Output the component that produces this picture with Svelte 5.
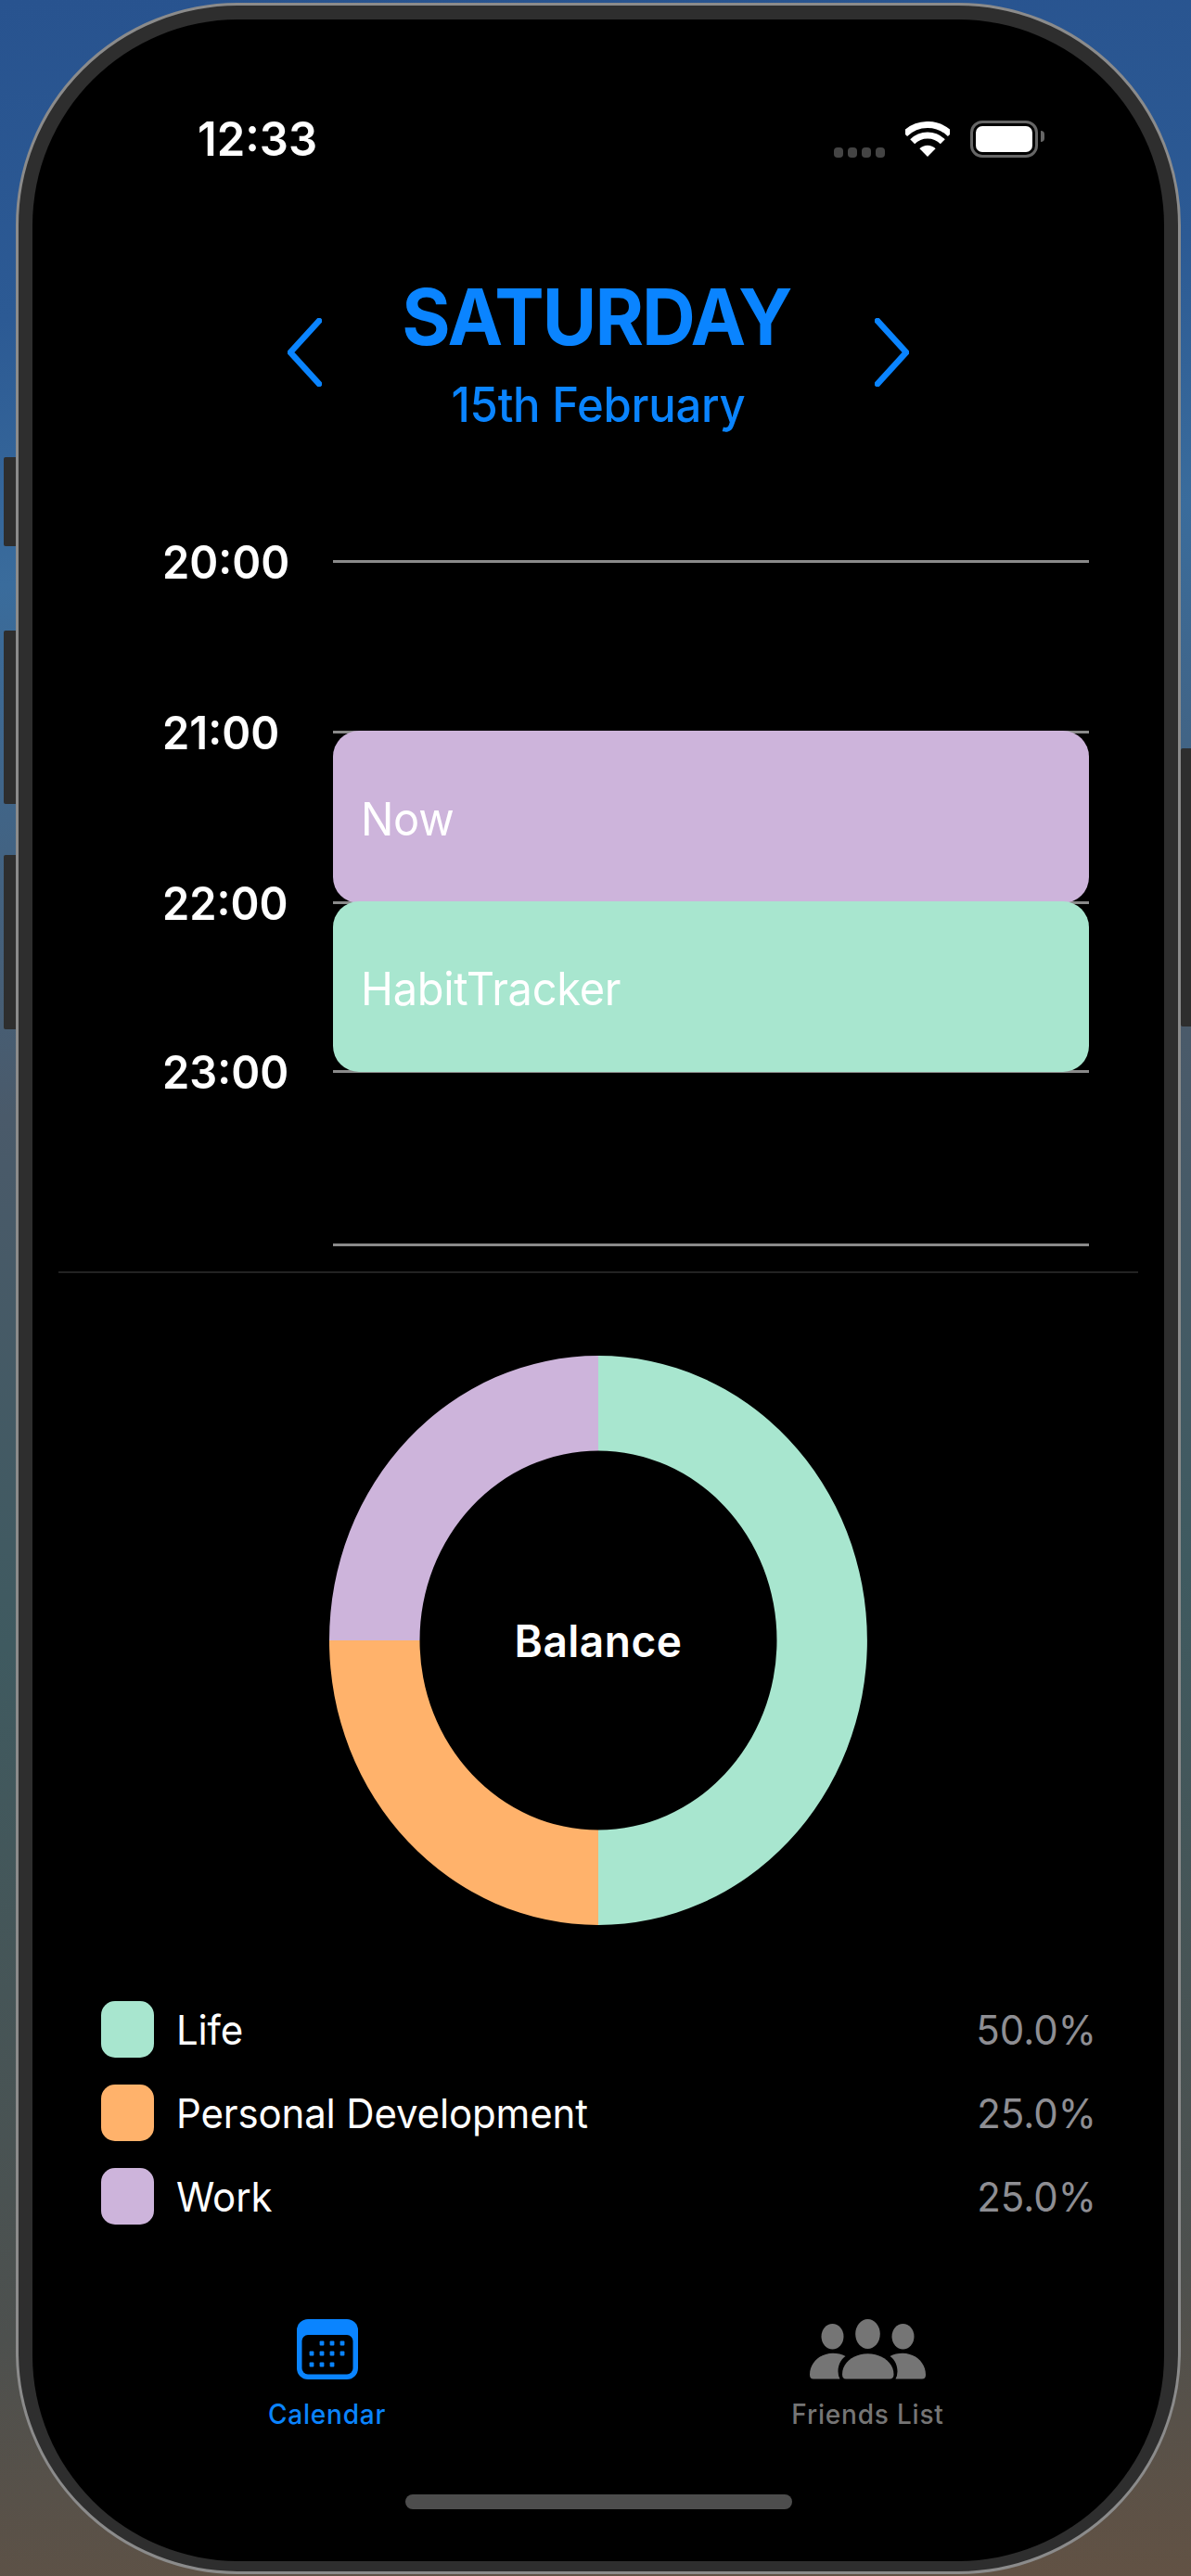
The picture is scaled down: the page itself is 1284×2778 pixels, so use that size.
<script lang="ts">
  const blue = '#0a84ff'

  // each hour line's offset from the first one, the spacing is not quite even
  const hours = [
    { label: '20:00', y: 0 },
    { label: '21:00', y: 184 },
    { label: '22:00', y: 368 },
    { label: '23:00', y: 550 },
    { label: '', y: 737 },
  ]

  const categories = {
    life: { name: 'Life', color: '#a8e6cf', share: '50.0%' },
    personal: { name: 'Personal Development', color: '#ffb26b', share: '25.0%' },
    work: { name: 'Work', color: '#cdb4db', share: '25.0%' },
  }

  const events = [
    { title: 'Now', start: 1, end: 2, color: categories.work.color },
    { title: 'HabitTracker', start: 2, end: 3, color: categories.life.color },
  ]

  const legend = Object.values(categories)

  // calendar dots, [x, y] in icon space
  const dots = [
    [27, 26], [38, 26], [49, 26],
    [16, 37], [27, 37], [38, 37], [49, 37],
    [16, 49], [27, 49], [38, 49],
  ]
</script>

<div class="page">
  <div class="phone">
    <span class="btn btn-mute"></span>
    <span class="btn btn-up"></span>
    <span class="btn btn-down"></span>
    <span class="btn btn-power"></span>

    <div class="screen">
      <!-- status bar -->
      <div class="status">
        <span class="time tall">12:33</span>
        <div class="status-icons">
          <div class="signal">
            <i></i><i></i><i></i><i></i>
          </div>
          <svg class="wifi" width="48" height="38" viewBox="0 0 48 38" fill="none" stroke="#fff" stroke-width="7">
            <path d="M-0.4 13.6A34.5 34.5 0 0 1 48.4 13.6" />
            <path d="M7.7 21.7A23 23 0 0 1 40.3 21.7" />
            <path d="M24 38L15.4 29.3A12.2 12.2 0 0 1 32.6 29.3Z" fill="#fff" stroke="none" />
          </svg>
          <div class="battery"><span></span></div>
        </div>
      </div>

      <!-- day header -->
      <div class="day-nav">
        <svg width="37" height="74" viewBox="0 0 37 74" fill="none" stroke={blue} stroke-width="6.5" stroke-linecap="round" stroke-linejoin="round">
          <path d="M34 3L3 37L34 71" />
        </svg>
        <div class="day-title">
          <h1 class="tall">SATURDAY</h1>
          <p class="tall">15th February</p>
        </div>
        <svg width="37" height="74" viewBox="0 0 37 74" fill="none" stroke={blue} stroke-width="6.5" stroke-linecap="round" stroke-linejoin="round">
          <path d="M3 3L34 37L3 71" />
        </svg>
      </div>

      <!-- timeline -->
      <div class="timeline">
        <div class="hours">
          {#each hours as hour, i}
            <div class="hour" style="margin-top:{i ? hour.y - hours[i - 1].y - 3 : 0}px">
              <span class="hour-label tall">{hour.label}</span>
              <span class="hour-line"></span>
            </div>
          {/each}
        </div>
        {#each events as ev}
          <div
            class="event"
            style="top:{hours[ev.start].y}px;height:{hours[ev.end].y - hours[ev.start].y + 2}px;background:{ev.color}"
          >
            <span class="tall">{ev.title}</span>
          </div>
        {/each}
      </div>

      <div class="divider"></div>

      <!-- donut -->
      <div class="donut">
        <svg width="580" height="614" viewBox="0 0 580 614">
          <path d="M290 0A290 307 0 0 1 290 614L290 511.5A192.5 204.5 0 0 0 290 102.5Z" fill={categories.life.color} />
          <path d="M290 614A290 307 0 0 1 0 307L97.5 307A192.5 204.5 0 0 0 290 511.5Z" fill={categories.personal.color} />
          <path d="M0 307A290 307 0 0 1 290 0L290 102.5A192.5 204.5 0 0 0 97.5 307Z" fill={categories.work.color} />
        </svg>
        <span class="donut-label tall">Balance</span>
      </div>

      <!-- legend -->
      <div class="legend">
        {#each legend as item}
          <div class="legend-row">
            <span class="swatch" style="background:{item.color}"></span>
            <span class="legend-name tall">{item.name}</span>
            <span class="legend-share tall">{item.share}</span>
          </div>
        {/each}
      </div>

      <!-- tab bar -->
      <div class="tabs">
        <div class="tab tab--active">
          <svg width="66" height="65" viewBox="0 0 66 65">
            <rect width="66" height="65" rx="12" fill={blue} />
            <rect x="5.5" y="17" width="55" height="42.5" rx="6.5" fill="#000" />
            {#each dots as [x, y]}
              <rect x={x - 2.4} y={y - 2.4} width="4.8" height="4.8" rx="1" fill={blue} />
            {/each}
          </svg>
          <span class="tall">Calendar</span>
        </div>
        <div class="tab">
          <svg width="125" height="65" viewBox="0 0 125 65" fill="#757575">
            <ellipse cx="62.5" cy="16" rx="13.3" ry="16" />
            <ellipse cx="24.5" cy="18.7" rx="12" ry="13.7" />
            <ellipse cx="100.5" cy="18.7" rx="12" ry="13.7" />
            <path d="M39 64.5Q35 64.5 35 59.5C35 47 47 37.3 62.5 37.3C78 37.3 90.5 47 90.5 59.5Q90.5 64.5 86 64.5Z" />
            <path d="M4 64.5Q0 64.5 0 60C0 47 11 36.7 25 36.7C30 36.7 34.5 37.8 38.5 40C33 44 30.5 50 30.5 56.5Q30.5 61 32.5 64.5Z" />
            <path d="M121 64.5Q125 64.5 125 60C125 47 114 36.7 100 36.7C95 36.7 90.5 37.8 86.5 40C92 44 94.5 50 94.5 56.5Q94.5 61 92.5 64.5Z" />
          </svg>
          <span class="tall">Friends List</span>
        </div>
      </div>

      <div class="home-indicator"></div>
    </div>
  </div>
</div>

<style>
  :global(body) {
    margin: 0;
    background: #000;
  }

  .page {
    box-sizing: border-box;
    width: 1284px;
    height: 2778px;
    padding: 3px 11px 2px 17px;
    display: flex;
    overflow: hidden;
    background: linear-gradient(176deg, #28538f 0%, #2c5a94 12%, #3a6c9c 22%, #4a5a6a 42%, #3f5a60 62%, #4d504e 88%, #625244 100%);
    font-family: Inter, 'Noto Sans', sans-serif;
  }

  /* the whole capture is a little stretched vertically, text too */
  .tall {
    transform: scaleY(1.05);
  }

  .phone {
    position: relative;
    flex: 1;
    box-sizing: border-box;
    padding: 15px 15px 11px;
    border: 3px solid #8b8b8b;
    border-radius: 240px;
    background: #2e2e2e;
  }

  .btn {
    position: absolute;
    left: -16px;
    width: 13px;
    background: #2e2e2e;
    border-radius: 2px 0 0 2px;
  }
  .btn-mute { top: 487px; height: 96px; }
  .btn-up { top: 674px; height: 187px; }
  .btn-down { top: 916px; height: 188px; }
  .btn-power { top: 801px; height: 300px; left: auto; right: -14px; width: 11px; }

  .screen {
    height: 100%;
    box-sizing: border-box;
    padding-top: 109px;
    border-radius: 222px;
    background: #000;
    display: flex;
    flex-direction: column;
    color: #fff;
  }

  /* ── Status bar ── */
  .status {
    height: 40px;
    padding: 0 136px 0 178px;
    display: flex;
    align-items: center;
    justify-content: space-between;
  }

  .time {
    font-size: 49px;
    font-weight: 600;
    line-height: 50px;
  }

  .status-icons {
    display: flex;
    align-items: center;
  }

  .signal {
    display: flex;
    gap: 5px;
    margin: 28px 22px 0 0;
  }
  .signal i {
    width: 10px;
    height: 11px;
    border-radius: 4px;
    background: #444;
  }

  .wifi {
    display: block;
    margin-right: 22px;
    overflow: hidden;
  }

  .battery {
    position: relative;
    box-sizing: border-box;
    width: 73px;
    height: 40px;
    padding: 3px;
    border: 3px solid #666;
    border-radius: 13px;
  }
  .battery span {
    display: block;
    height: 100%;
    border-radius: 7px;
    background: #fff;
  }
  .battery::after {
    content: '';
    position: absolute;
    top: 8px;
    right: -10px;
    width: 4px;
    height: 12px;
    border-radius: 0 4px 4px 0;
    background: #666;
  }

  /* ── Day header ── */
  .day-nav {
    margin-top: 130px;
    display: flex;
    align-items: center;
    justify-content: center;
    gap: 88px;
  }
  .day-nav svg {
    margin-top: -4px;
  }

  .day-title {
    width: 420px;
    text-align: center;
    color: #0a84ff;
  }
  .day-title h1 {
    margin: 0 0 0 -4px;
    font-size: 80px;
    font-weight: 700;
    line-height: 84px;
    letter-spacing: -1.9px;
    white-space: nowrap;
  }
  .day-title p {
    margin: 27px 0 0;
    font-size: 49px;
    font-weight: 500;
    line-height: 52px;
    letter-spacing: -0.25px;
    white-space: nowrap;
  }

  /* ── Timeline ── */
  .timeline {
    position: relative;
    margin: 141px 81px 0 140px;
  }

  .hours {
    display: flex;
    flex-direction: column;
  }
  .hour {
    display: flex;
    align-items: center;
    height: 3px;
  }
  .hour-label {
    width: 184px;
    flex: none;
    font-size: 47px;
    font-weight: 600;
    line-height: 50px;
  }
  .hour-line {
    flex: 1;
    height: 3px;
    background: #8a8a8a;
  }

  .event {
    position: absolute;
    left: 184px;
    right: 0;
    box-sizing: border-box;
    padding: 4px 0 0 30px;
    display: flex;
    align-items: center;
    border-radius: 28px;
    font-size: 47px;
    line-height: 50px;
    letter-spacing: -0.3px;
  }

  .divider {
    height: 2px;
    margin: 27px 28px 0;
    background: #222;
  }

  /* ── Donut ── */
  .donut {
    display: grid;
    justify-content: center;
    align-items: center;
    justify-items: center;
    margin-top: 89px;
  }
  .donut svg,
  .donut-label {
    grid-area: 1 / 1;
  }
  .donut svg {
    display: block;
  }
  .donut-label {
    font-size: 46px;
    font-weight: 600;
    line-height: 50px;
    letter-spacing: 0.5px;
  }

  /* ── Legend ── */
  .legend {
    display: flex;
    flex-direction: column;
    gap: 29px;
    margin-top: 82px;
    padding: 0 73px 0 74px;
  }
  .legend-row {
    display: flex;
    align-items: center;
    height: 61px;
    font-size: 42px;
    line-height: 46px;
  }
  .swatch {
    width: 57px;
    height: 61px;
    margin-right: 24px;
    border-radius: 15px;
  }
  .legend-name {
    letter-spacing: -0.15px;
  }
  .legend-share {
    margin-left: auto;
    color: #8e8e93;
  }

  /* ── Tab bar ── */
  .tabs {
    display: grid;
    grid-template-columns: 583px 583px;
    margin-top: 102px;
    padding-left: 26px;
  }
  .tab {
    display: flex;
    flex-direction: column;
    align-items: center;
    color: #757575;
    font-size: 28px;
    font-weight: 500;
    line-height: 29px;
    letter-spacing: 0.8px;
  }
  .tab svg {
    display: block;
    margin-bottom: 24px;
  }
  .tab--active {
    color: #0a84ff;
  }

  .home-indicator {
    width: 417px;
    height: 16px;
    margin: 71px auto 0;
    border-radius: 8px;
    background: #4d4d4d;
  }
</style>
